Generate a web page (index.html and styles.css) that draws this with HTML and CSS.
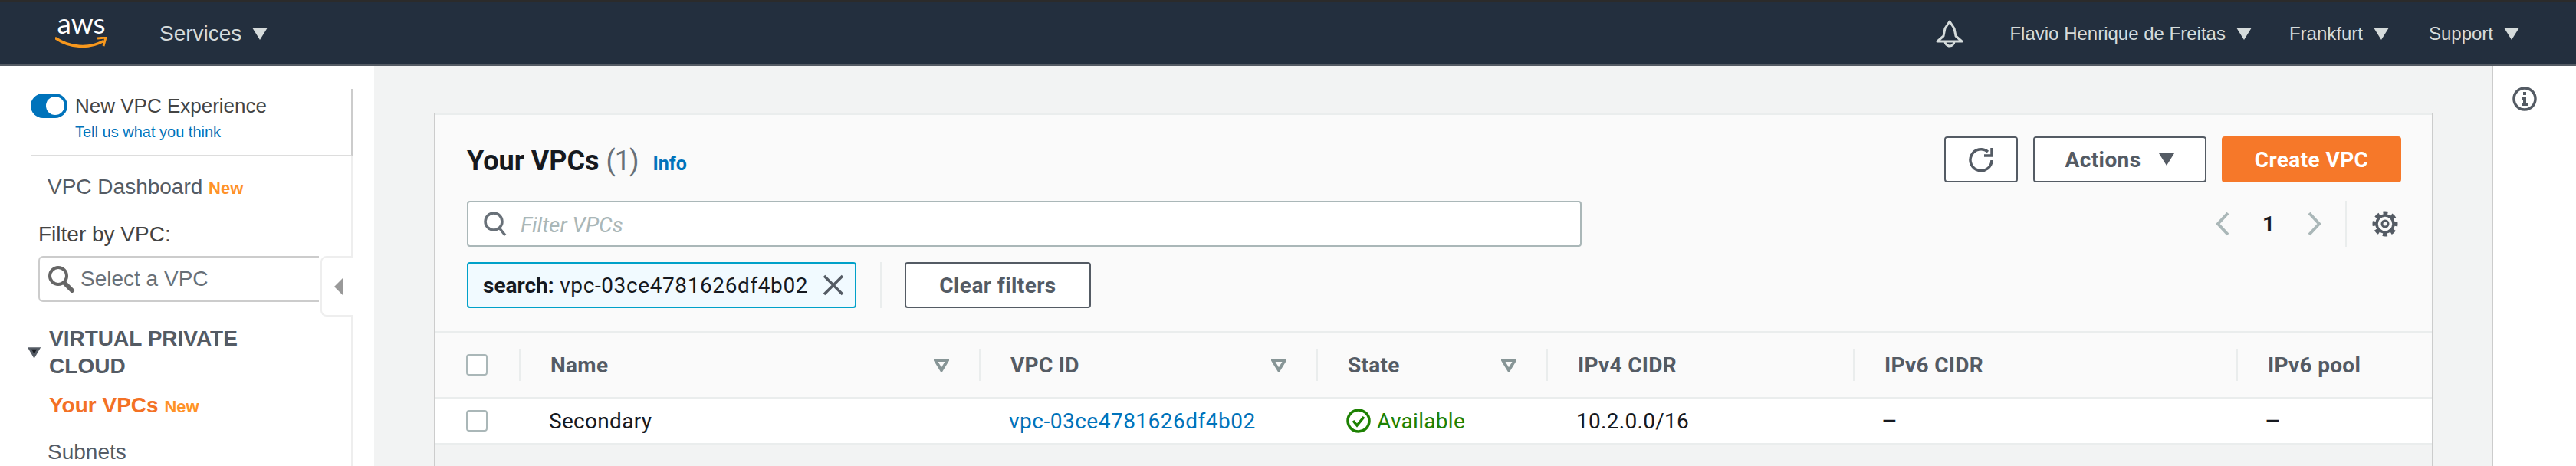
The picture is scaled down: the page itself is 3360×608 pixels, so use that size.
FILE: index.html
```html
<!DOCTYPE html>
<html lang="en">
<head>
    <meta charset="UTF-8">
    <title>Your VPCs</title>
    <link rel="stylesheet" href="styles.css">
</head>
<body>
    <header class="topbar">
        <div class="aws-logo">
            <span class="aws-text">aws</span>
            <svg class="aws-smile" width="68" height="16" viewBox="0 25 68 16">
                <path d="M1 27 C18 39 44 41 62 31" fill="none" stroke="#f7981d" stroke-width="3.5" stroke-linecap="round"/>
                <path d="M55 27 L66 26 L63 37" fill="none" stroke="#f7981d" stroke-width="3"/>
            </svg>
        </div>
        <span class="services">Services</span>
        <span class="caret caret-big"></span>
        <svg class="bell" width="36" height="36" viewBox="0 0 36 36">
            <path d="M18 2 L24 11 L26 21 L34 28 L2 28 L10 21 L12 11 Z" fill="none" stroke="#d5dbdb" stroke-width="3" stroke-linejoin="round"/>
            <path d="M12 28 A6 6 0 0 0 24 28" fill="none" stroke="#d5dbdb" stroke-width="3"/>
        </svg>
        <span class="top-item top-user">Flavio Henrique de Freitas</span>
        <span class="caret"></span>
        <span class="top-item top-region">Frankfurt</span>
        <span class="caret"></span>
        <span class="top-item top-support">Support</span>
        <span class="caret"></span>
    </header>

    <div class="content">
        <aside class="side">
            <div class="side-inner">
                <div class="exp">
                    <div class="exp-row">
                        <span class="toggle"><span class="knob"></span></span>
                        <span class="exp-label">New VPC Experience</span>
                    </div>
                    <a class="exp-link">Tell us what you think</a>
                </div>
                <nav class="side-nav">
                    <div class="nav-dash">VPC Dashboard <span class="new">New</span></div>
                    <div class="filter-label">Filter by VPC:</div>
                    <div class="vpc-select">
                        <svg width="36" height="36" viewBox="0 0 36 36">
                            <circle cx="14" cy="14" r="11" fill="none" stroke="#666" stroke-width="4"/>
                            <path d="M22 23 L32 33" stroke="#666" stroke-width="6" stroke-linecap="round"/>
                        </svg>
                        <span>Select a VPC</span>
                    </div>
                    <div class="nav-heading">
                        <svg width="20" height="17" viewBox="0 0 20 17"><path d="M0 0 H20 L10 17 Z" fill="#545b64"/><path d="M6 3 H14 L10 10 Z" fill="#16191f"/></svg>
                        <span>VIRTUAL PRIVATE CLOUD</span>
                    </div>
                    <div class="nav-active">Your VPCs <span class="new">New</span></div>
                    <div class="nav-item">Subnets</div>
                </nav>
                <div class="collapse-tab"><span class="collapse-arrow"></span></div>
            </div>
        </aside>

        <main class="main">
            <section class="panel">
                <div class="panel-top">
                    <div class="row row-title">
                        <h1 class="title">Your VPCs <span class="count">(1)</span> <a class="info">Info</a></h1>
                        <div class="actions">
                            <button class="btn btn-icon">
                                <svg width="34" height="34" viewBox="0 0 34 34">
                                    <path d="M26 7 A14 14 0 1 0 31 18" fill="none" stroke="#545b64" stroke-width="3.5"/>
                                    <path d="M21 12 H31 V2" fill="none" stroke="#545b64" stroke-width="3.5"/>
                                </svg>
                            </button>
                            <button class="btn btn-actions">Actions <span class="caret caret-dark"></span></button>
                            <button class="btn btn-primary">Create VPC</button>
                        </div>
                    </div>
                    <div class="row row-filter">
                        <div class="filter-box">
                            <svg width="32" height="32" viewBox="0 0 32 32">
                                <circle cx="13" cy="13" r="11" fill="none" stroke="#687078" stroke-width="3.5"/>
                                <path d="M20 21 L28 31" stroke="#687078" stroke-width="3.5"/>
                            </svg>
                            <span class="placeholder">Filter VPCs</span>
                        </div>
                        <div class="pager">
                            <svg width="20" height="32" viewBox="0 0 20 32"><path d="M17 2 L4 16 L17 30" fill="none" stroke="#aab7b8" stroke-width="4"/></svg>
                            <span class="page-num">1</span>
                            <svg width="20" height="32" viewBox="0 0 20 32"><path d="M3 2 L16 16 L3 30" fill="none" stroke="#aab7b8" stroke-width="4"/></svg>
                            <span class="pager-div"></span>
                            <svg width="34" height="34" viewBox="0 0 34 34">
                                <circle cx="17" cy="17" r="4" fill="none" stroke="#545b64" stroke-width="3"/>
                                <circle cx="17" cy="17" r="11" fill="none" stroke="#545b64" stroke-width="3.5"/>
                                <circle cx="17" cy="17" r="14" fill="none" stroke="#545b64" stroke-width="5" stroke-dasharray="6 5" stroke-dashoffset="3"/>
                            </svg>
                        </div>
                    </div>
                    <div class="row row-token">
                        <div class="token">
                            <span class="token-text"><b>search:</b> vpc-03ce4781626df4b02</span>
                            <svg width="28" height="28" viewBox="0 0 28 28"><path d="M2 2 L26 26 M26 2 L2 26" stroke="#545b64" stroke-width="3.5"/></svg>
                        </div>
                        <span class="token-div"></span>
                        <button class="btn btn-clear">Clear filters</button>
                    </div>
                </div>

                <div class="table">
                    <div class="thead">
                        <div class="cell cell-check"><span class="checkbox"></span></div>
                        <div class="cell th">Name<svg class="sort" width="20" height="17" viewBox="0 0 20 17"><path d="M2 2 H18 L10 15 Z" fill="none" stroke="#879596" stroke-width="4"/></svg></div>
                        <div class="cell th">VPC ID<svg class="sort" width="20" height="17" viewBox="0 0 20 17"><path d="M2 2 H18 L10 15 Z" fill="none" stroke="#879596" stroke-width="4"/></svg></div>
                        <div class="cell th">State<svg class="sort" width="20" height="17" viewBox="0 0 20 17"><path d="M2 2 H18 L10 15 Z" fill="none" stroke="#879596" stroke-width="4"/></svg></div>
                        <div class="cell th">IPv4 CIDR</div>
                        <div class="cell th">IPv6 CIDR</div>
                        <div class="cell th">IPv6 pool</div>
                    </div>
                    <div class="tbody">
                        <div class="cell cell-check"><span class="checkbox"></span></div>
                        <div class="cell td">Secondary</div>
                        <div class="cell td"><a class="vpc-link">vpc-03ce4781626df4b02</a></div>
                        <div class="cell td status">
                            <svg width="32" height="32" viewBox="0 0 32 32">
                                <circle cx="16" cy="16" r="14" fill="none" stroke="#1d8102" stroke-width="3.5"/>
                                <path d="M9 16 L14 22 L23 11" fill="none" stroke="#1d8102" stroke-width="3.5"/>
                            </svg>
                            Available
                        </div>
                        <div class="cell td">10.2.0.0/16</div>
                        <div class="cell td dash">–</div>
                        <div class="cell td dash">–</div>
                    </div>
                </div>
            </section>
        </main>

        <aside class="help">
            <svg width="32" height="32" viewBox="0 0 32 32">
                <circle cx="16" cy="16" r="14" fill="none" stroke="#545b64" stroke-width="3.5"/>
                <path d="M14 7 H18 V11 H14 Z M12 14 H18 V22 H20 V25 H12 V22 H14 V17 H12 Z" fill="#545b64"/>
            </svg>
        </aside>
    </div>
</body>
</html>
```

FILE: styles.css
```css
* {
    box-sizing: border-box;
}
html, body {
    margin: 0;
    height: 608px;
    overflow: hidden;
}
body {
    display: flex;
    flex-direction: column;
    font-family: Roboto, sans-serif;
    font-size: 28px;
    color: #16191f;
    background-color: #f2f3f3;
}
a {
    text-decoration: none;
}
button {
    font-family: inherit;
}

/* top bar */
.topbar {
    display: flex;
    align-items: center;
    height: 86px;
    padding-left: 72px;
    background-color: #232f3e;
    border-top: 3px solid #2b2b2b;
    border-bottom: 2px solid #545b64;
    font-family: "Liberation Sans", sans-serif;
    color: #d5dbdb;
}
.aws-logo {
    flex: none;
    display: flex;
    flex-direction: column;
    width: 68px;
    margin-bottom: 8px;
}
.aws-text {
    font-family: Lato, sans-serif;
    font-size: 37px;
    line-height: 30px;
    text-align: center;
    color: #fff;
}
.aws-smile {
    display: block;
    margin-top: 3px;
}
.services {
    margin-left: 68px;
    font-size: 28px;
}
.caret {
    flex: none;
    display: inline-block;
    width: 0;
    height: 0;
    margin-left: 14px;
    border-left: 10px solid transparent;
    border-right: 10px solid transparent;
    border-top: 16px solid #d5dbdb;
}
.caret-big {
    margin-left: 14px;
}
.caret-dark {
    border-top-color: #545b64;
    margin-left: 24px;
}
.bell {
    margin-left: auto;
}
.top-item {
    font-size: 24px;
}
.top-user {
    margin-left: 60px;
}
.top-region {
    margin-left: 49px;
}
.top-support {
    margin-left: 52px;
}
.topbar .caret:last-child {
    margin-right: 74px;
}

.content {
    flex: 1;
    display: flex;
    min-height: 0;
}

/* left nav */
.side {
    flex: none;
    width: 488px;
    padding-top: 30px;
    background-color: #fff;
    font-family: "Liberation Sans", sans-serif;
    color: #545b64;
}
.side-inner {
    position: relative;
    width: 460px;
    height: 100%;
}
.exp {
    height: 88px;
    margin-left: 40px;
    padding-top: 6px;
    border-right: 2px solid #ccc;
    border-bottom: 2px solid #ddd;
}
.exp-row {
    display: flex;
    align-items: center;
    gap: 10px;
}
.toggle {
    display: flex;
    justify-content: flex-end;
    align-items: center;
    width: 48px;
    height: 32px;
    padding-right: 4px;
    border-radius: 16px;
    background-color: #0073bb;
}
.knob {
    width: 24px;
    height: 24px;
    border-radius: 50%;
    background-color: #fff;
}
.exp-label {
    font-size: 26px;
    line-height: 32px;
    color: #444;
}
.exp-link {
    display: block;
    margin: 6px 0 0 58px;
    font-size: 20px;
    line-height: 24px;
    color: #0073bb;
}
.side-nav {
    height: 404px;
    padding-top: 22px;
    border-right: 2px solid #eee;
    font-size: 28px;
    line-height: 36px;
}
.new {
    font-size: 22px;
    font-weight: bold;
    color: #ff9228;
}
.nav-dash {
    padding-left: 62px;
}
.filter-label {
    margin: 24px 0 10px 50px;
    color: #444;
}
.vpc-select {
    display: flex;
    align-items: center;
    gap: 7px;
    width: 366px;
    height: 60px;
    margin-left: 50px;
    padding-left: 10px;
    border: 2px solid #ccc;
    border-right: none;
    border-radius: 6px 0 0 6px;
    color: #687078;
}
.nav-heading {
    display: flex;
    align-items: center;
    gap: 11px;
    width: 330px;
    margin: 30px 0 15px 36px;
    font-weight: bold;
}
.nav-active {
    padding-left: 64px;
    font-weight: bold;
    color: #f37125;
}
.nav-item {
    margin-top: 23px;
    padding-left: 62px;
}
.collapse-tab {
    position: absolute;
    top: 218px;
    right: 0;
    display: flex;
    align-items: center;
    width: 42px;
    height: 79px;
    padding-left: 16px;
    background-color: #fff;
    border: 2px solid #eee;
    border-right: none;
    border-radius: 8px 0 0 8px;
}
.collapse-arrow {
    width: 0;
    height: 0;
    border-top: 12px solid transparent;
    border-bottom: 12px solid transparent;
    border-right: 12px solid #999;
}

/* main panel */
.main {
    flex: 1;
    min-width: 0;
    padding: 62px 76px 0 78px;
}
.panel {
    height: 100%;
    border-left: 2px solid #ccc;
    border-right: 2px solid #ccc;
}
.panel-top {
    height: 284px;
    padding: 28px 40px 0 41px;
    background-color: #fafafa;
    border-top: 2px solid #eaeded;
}
.row {
    display: flex;
    align-items: center;
    height: 60px;
}
.row-title,
.row-filter {
    justify-content: space-between;
}
.row-filter {
    margin-top: 24px;
}
.row-token {
    margin-top: 20px;
}
.title {
    margin: 4px 0 0;
    font-size: 36px;
    font-weight: bold;
}
.count {
    font-weight: normal;
    letter-spacing: -1px;
    color: #687078;
}
.info {
    margin-left: 10px;
    font-size: 25px;
    color: #0073bb;
}
.actions {
    display: flex;
    gap: 20px;
}
.btn {
    display: flex;
    align-items: center;
    justify-content: center;
    height: 60px;
    padding: 0;
    background-color: #fff;
    border: 2px solid #545b64;
    border-radius: 4px;
    font-size: 28px;
    font-weight: bold;
    letter-spacing: 0.4px;
    color: #545b64;
}
.btn-icon {
    width: 96px;
}
.btn-actions {
    width: 226px;
}
.btn-primary {
    width: 234px;
    background-color: #f67829;
    border-color: #f67829;
    color: #fff;
}
.btn-clear {
    width: 243px;
}
.filter-box {
    display: flex;
    align-items: center;
    gap: 16px;
    width: 1454px;
    height: 60px;
    padding-left: 20px;
    background-color: #fff;
    border: 2px solid #aab7b8;
    border-radius: 4px;
}
.placeholder {
    padding-top: 2px;
    font-style: italic;
    color: #aab7b8;
}
.pager {
    display: flex;
    align-items: center;
    height: 60px;
    margin-right: 4px;
}
.page-num {
    width: 100px;
    text-align: center;
    font-weight: bold;
}
.pager-div {
    width: 2px;
    height: 60px;
    margin: 0 33px 0 30px;
    background-color: #eaeded;
}
.token {
    display: flex;
    align-items: center;
    justify-content: space-between;
    width: 508px;
    height: 60px;
    padding: 0 14px 0 19px;
    background-color: #f1faff;
    border: 2px solid #00a1c9;
    border-radius: 4px;
    letter-spacing: 0.6px;
}
.token b {
    letter-spacing: 0;
}
.token-div {
    width: 2px;
    height: 60px;
    margin: 0 30px 0 31px;
    background-color: #eaeded;
}

/* table */
.table {
    border-top: 2px solid #eaeded;
}
.thead,
.tbody {
    display: grid;
    grid-template-columns: 109px 600px 440px 300px 400px 500px 1fr;
    align-items: center;
}
.thead {
    height: 86px;
    background-color: #fafafa;
    border-bottom: 2px solid #eaeded;
}
.tbody {
    height: 60px;
    background-color: #fff;
    border-bottom: 2px solid #eaeded;
}
.cell {
    display: flex;
    align-items: center;
    padding-left: 39px;
}
.cell-check {
    padding-left: 40px;
}
.checkbox {
    width: 28px;
    height: 28px;
    background-color: #fff;
    border: 2px solid #aab7b8;
    border-radius: 4px;
}
.th {
    justify-content: space-between;
    height: 42px;
    padding-right: 39px;
    border-left: 2px solid #eaeded;
    font-weight: bold;
    letter-spacing: 0.3px;
    color: #545b64;
}
.td {
    letter-spacing: 0.3px;
}
.dash {
    padding-left: 37px;
    font-size: 32px;
}
.vpc-link {
    letter-spacing: 0.5px;
    color: #0073bb;
}
.status {
    gap: 8px;
    color: #1d8102;
}

/* right help rail */
.help {
    flex: none;
    width: 110px;
    padding: 27px 0 0 25px;
    background-color: #fff;
    border-left: 2px solid #ccc;
}
```
